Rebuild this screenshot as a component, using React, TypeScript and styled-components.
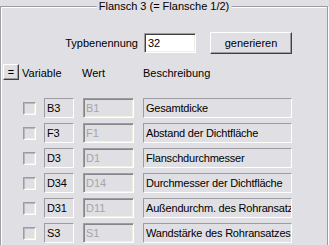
import * as React from "react"
import styled, { createGlobalStyle } from "styled-components"

const face = "#e0dfe3"
const shadow = "#9d9da1"
const dark = "#404040"

const GlobalStyle = createGlobalStyle`
  html, body {
    margin: 0;
    padding: 0;
    background: ${face};
  }
  body {
    font-family: "Liberation Sans", Arial, sans-serif;
    font-size: 11px;
    color: #000;
  }
`

interface Row {
  variable: string;
  wert: string;
  text: string;
}

const rows: Row[] = [
  { variable: "B3", wert: "B1", text: "Gesamtdicke" },
  { variable: "F3", wert: "F1", text: "Abstand der Dichtfläche" },
  { variable: "D3", wert: "D1", text: "Flanschdurchmesser" },
  { variable: "D34", wert: "D14", text: "Durchmesser der Dichtfläche" },
  { variable: "D31", wert: "D11", text: "Außendurchm. des Rohransatzes" },
  { variable: "S3", wert: "S1", text: "Wandstärke des Rohransatzes" },
]

const App: React.FC = () => {
  return (
    <Frame>
      <GlobalStyle />
      <Group>
        <Title>Flansch 3 (= Flansche 1/2)</Title>
        <TypRow>
          <TypLabel>Typbenennung</TypLabel>
          <Edit defaultValue="32" />
          <Button>generieren</Button>
        </TypRow>
        <Header>
          <SmallButton>=</SmallButton>
          <HeadLabel $width={60}>Variable</HeadLabel>
          <HeadLabel $width={61}>Wert</HeadLabel>
          <HeadLabel>Beschreibung</HeadLabel>
        </Header>
        <Rows>
          {rows.map((r) => (
            <VarRow key={r.variable}>
              <Check />
              <StaticBox $width={30} $gap={8}>{r.variable}</StaticBox>
              <DisabledBox>{r.wert}</DisabledBox>
              <StaticBox $width={149} $gap={9}>{r.text}</StaticBox>
            </VarRow>
          ))}
        </Rows>
      </Group>
    </Frame>
  )
}
export default App

const Frame = styled.div`
  width: 329px;
  height: 245px;
  overflow: hidden;
  padding-top: 6px;
  box-sizing: border-box;
`

const Group = styled.div`
  position: relative;
  width: 328px;
  height: 260px;
  box-sizing: border-box;
  border: 1px solid ${shadow};
  box-shadow: inset 1px 1px 0 #fff, 1px 1px 0 #fff;
  padding: 1px 0 0 1px;
`

const Title = styled.div`
  position: absolute;
  top: -8px;
  left: 50%;
  transform: translateX(-50%);
  padding: 0 2px;
  background: ${face};
  white-space: nowrap;
  line-height: 14px;
`

const TypRow = styled.div`
  display: flex;
  align-items: center;
  height: 22px;
  margin-top: 24px;
`

const TypLabel = styled.span`
  width: 136px;
  text-align: right;
  margin-right: 6px;
`

const Edit = styled.input`
  width: 52px;
  height: 20px;
  box-sizing: border-box;
  margin: 0 14px 0 0;
  padding: 0 3px;
  border-style: solid;
  border-width: 1px;
  border-color: ${shadow} #fff #fff ${shadow};
  box-shadow: inset 1px 1px 0 ${dark}, inset -1px -1px 0 #f1efe2;
  background: #fff;
  font: inherit;
  outline: none;
`

const Button = styled.div`
  width: 82px;
  height: 22px;
  box-sizing: border-box;
  display: flex;
  align-items: center;
  justify-content: center;
  border-style: solid;
  border-width: 1px;
  border-color: #fff ${dark} ${dark} #fff;
  box-shadow: inset -1px -1px 0 ${shadow};
  background: ${face};
`

const Header = styled.div`
  display: flex;
  align-items: flex-end;
  height: 16px;
  margin-top: 10px;
  padding-left: 1px;
`

const SmallButton = styled(Button)`
  width: 16px;
  height: 16px;
  margin-right: 3px;
  line-height: 1;
`

const HeadLabel = styled.span<{ $width?: number }>`
  width: ${({ $width }) => ($width ? `${$width}px` : "auto")};
  line-height: 13px;
`

const Rows = styled.div`
  display: flex;
  flex-direction: column;
  gap: 5px;
  margin-top: 18px;
`

const VarRow = styled.div`
  display: flex;
  align-items: center;
  height: 20px;
`

const Check = styled.span`
  width: 13px;
  height: 13px;
  box-sizing: border-box;
  margin-left: 21px;
  border-style: solid;
  border-width: 1px;
  border-color: ${shadow} #fff #fff ${shadow};
  box-shadow: inset 1px 1px 0 #b9b8bc, inset -1px -1px 0 #f1efe2;
  background: ${face};
`

const StaticBox = styled.div<{ $width: number; $gap: number }>`
  width: ${({ $width }) => $width}px;
  height: 20px;
  box-sizing: border-box;
  margin-left: ${({ $gap }) => $gap}px;
  padding: 0 2px;
  display: flex;
  align-items: center;
  border-style: solid;
  border-width: 1px;
  border-color: ${shadow} #fff #fff ${shadow};
  letter-spacing: -0.2px;
  white-space: nowrap;
  overflow: hidden;
`

const DisabledBox = styled.div`
  width: 51px;
  height: 20px;
  box-sizing: border-box;
  margin-left: 9px;
  padding: 0 2px;
  display: flex;
  align-items: center;
  border-style: solid;
  border-width: 1px;
  border-color: ${shadow} #fff #fff ${shadow};
  box-shadow: inset 1px 1px 0 #86868a, inset -1px -1px 0 #f1efe2;
  color: #a5a5a9;
`
